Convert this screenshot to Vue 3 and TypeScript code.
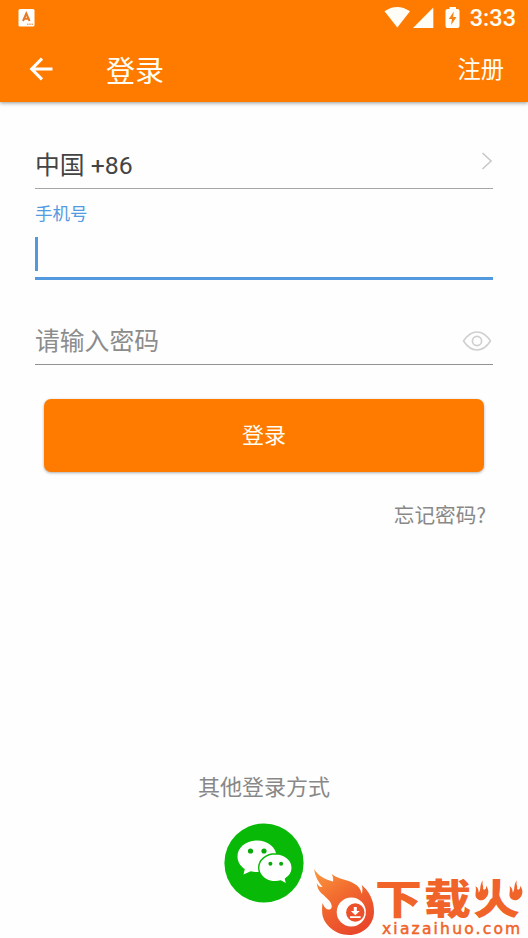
<script setup lang="ts">
import { ref } from 'vue'

const country = ref('中国 +86')
const passwordHint = '请输入密码'
</script>

<template>
  <div class="screen">
    <header class="header">
      <div class="status">
        <svg class="app-badge" width="17" height="18" viewBox="0 0 17 18">
          <rect x=".5" width="16" height="17.4" rx="1.5" fill="#fff" />
          <path d="M5 12 8.300 4.500l3.300 7.500M6.200 9.800h4.200" fill="none" stroke="#e87924" stroke-width="2" />
          <path d="M9 15.300h6" stroke="#f5a460" stroke-width="1.400" stroke-dasharray="1.500 .8" />
        </svg>
        <div class="system">
          <svg width="86" height="36" viewBox="385 0 86 36" class="system-icons">
            <path d="M385.500 11.300Q398 2.500 411 11.300L398.300 27.500Z" fill="#fffdf5" />
            <path d="M434.300 7.500V28H414Z" fill="#fffdf5" />
            <path d="M450.500 7h6.500v2h1.500q2 0 2 2v15q0 2-2 2h-10q-2 0-2-2V11q0-2 2-2h2Z" fill="#fffdf5" />
            <path d="M454.800 11.500 449.800 19h3.100l-.8 6 5.400-8h-3.400Z" fill="#f78216" />
          </svg>
          <span class="clock">3:33</span>
        </div>
      </div>
      <div class="toolbar">
        <svg class="back" width="26" height="26" viewBox="0 0 26 26">
          <path d="M24.500 13H4M14 2.700 3.700 13 14 23.300" fill="none" stroke="#fff" stroke-width="3.100" />
        </svg>
        <h1>登录</h1>
        <span class="register">注册</span>
      </div>
    </header>

    <main class="form">
      <div class="country">
        <span>{{ country }}</span>
        <svg width="12" height="18" viewBox="0 0 12 18">
          <path d="m1.500 1 8.600 8-8.600 8" fill="none" stroke="#c6c6c6" stroke-width="1.500" />
        </svg>
      </div>
      <div class="phone">
        <label>手机号</label>
        <div class="caret"></div>
      </div>
      <div class="password">
        <span>{{ passwordHint }}</span>
        <svg width="30" height="22" viewBox="0 0 30 22">
          <path d="M1.500 11Q7.500 2 15 2t13.500 9Q22.500 20 15 20T1.500 11Z" fill="none" stroke="#cfcfcf" stroke-width="1.600" stroke-linejoin="round" />
          <circle cx="15" cy="11" r="4.600" fill="none" stroke="#cfcfcf" stroke-width="1.700" />
        </svg>
      </div>
      <button class="login" type="button">登录</button>
      <div class="forgot">忘记密码?</div>
    </main>

    <section class="others">
      <p>其他登录方式</p>
      <svg class="wechat" width="80" height="80" viewBox="0 0 80 80">
        <circle cx="40" cy="40" r="39.600" fill="#08ba07" />
        <path d="M33 17.500C22 17.500 13.500 24.500 13.500 33.500c0 5.300 2.900 9.700 7.300 12.500L19.500 51.500l7.200-3.300c2 .6 4.200.9 6.500.9 10.900 0 19.300-7 19.300-15.700S44 17.500 33 17.500Z" fill="#fff" />
        <path d="M51.500 30.800C42 30.800 34.700 37 34.700 44.800S42 58.700 51.500 58.700c1.800 0 3.500-.2 5.200-.7l6.100 3.300-1.300-5.400c4-2.600 6.700-6.600 6.700-11.100 0-7.800-7.400-14-16.700-14Z" fill="#fff" stroke="#08ba07" stroke-width="1.400" />
        <circle cx="26.500" cy="28" r="2.600" fill="#08a90a" />
        <circle cx="40" cy="28" r="2.600" fill="#08a90a" />
        <circle cx="46.400" cy="40.700" r="2" fill="#08a90a" />
        <circle cx="57.100" cy="40.700" r="2" fill="#08a90a" />
      </svg>
    </section>

    <aside class="brand">
      <svg class="flame" width="62" height="68" viewBox="0 0 62 68">
        <defs>
          <linearGradient id="fire" x1="0" y1="0" x2=".6" y2="1">
            <stop offset="0" stop-color="#fb9a40" />
            <stop offset=".45" stop-color="#f26d2f" />
            <stop offset="1" stop-color="#e9482b" />
          </linearGradient>
        </defs>
        <path d="M1 1C5 7.500 11 11 20 13.500 20.500 11 20 9 18.700 6 24 10.500 32 11.500 38 14c7 3 10 7 10.500 12 1.500-3 1-6 .2-9C56 23 61 32 61 43.500 61 57 50 67 36 67S10.500 56 9.300 46C9 42 9 39 9.500 35c1.500 4 4 7 7 6.500 3.500-1 2.500-5 0-8.500C11 26 4.500 25 3.700 15 5 17.500 7 19.500 9.500 19 5 14 2 8 1 1Z" fill="url(#fire)" />
        <circle cx="38.300" cy="44" r="14.600" fill="#fff" />
        <circle cx="42.300" cy="44.500" r="9.200" fill="#ed512b" />
        <path d="M40.800 39h3v4h3l-4.500 4.300-4.500-4.300h3ZM37 48.300h10.600v1.800H37Z" fill="#fff" />
      </svg>
      <div class="brand-copy">
        <div class="brand-name">
          <span>下</span><span>载</span><span class="huo">火
            <svg class="sparks" width="50" height="28" viewBox="0 0 50 28">
              <path d="M0-3h19.500v23L15 24H0ZM29.500-3H50v28H36l-6.500-4Z" fill="#fefefe" />
              <path id="spark" d="M10 0c-1.500 5 1 7 0 10l1.500 1c1.500-1 2-3 1.500-5 4 6 2.500 12-1 15-4 4-10 1-9.500-5 0-3 1-6 0-9 2 1 3.500 4 3 7 3-3 .5-9 4.500-14Z" fill="#f0642a" />
              <use href="#spark" x="34" y="0" />
            </svg>
          </span>
        </div>
        <div class="brand-url">xiazaihuo.com</div>
      </div>
    </aside>
  </div>
</template>

<style>
body { background: #fefefe; }
</style>

<style scoped>
* { box-sizing: border-box; }
.screen {
  position: relative;
  width: 528px;
  height: 938px;
  overflow: hidden;
  background: #fefefe;
  color: #444;
  font-family: Roboto, "Noto Sans CJK SC", sans-serif;
}
.header {
  height: 102px;
  color: #fffdf4;
  background: #ff7b00;
  box-shadow: 0 1px 4px rgba(0, 0, 0, .42);
}
.status {
  display: flex;
  height: 36px;
  align-items: center;
  justify-content: space-between;
  padding: 0 12px 0 18px;
}
.system { display: flex; align-items: center; }
.clock { font: 500 23.500px/36px Roboto, sans-serif; }
.toolbar {
  display: flex;
  height: 66px;
  align-items: center;
  padding: 0 24px 0 28px;
}
h1 { margin: 0 0 0 52px; padding-top: 5px; font-size: 29px; font-weight: 400; line-height: 42px; }
.register { margin-left: auto; padding-top: 2px; font-size: 23.300px; line-height: 36px; }
.form { padding: 38px 35px 0; }
.country {
  display: flex;
  height: 49px;
  align-items: center;
  justify-content: space-between;
  border-bottom: 1px solid #a6a6a6;
  font-size: 24.800px;
  line-height: 36px;
}
.country span { padding-top: 4px; }
.country svg { margin-bottom: 7px; }
.phone {
  height: 91px;
  padding-top: 12px;
  border-bottom: 3px solid #529add;
  color: #529be1;
}
label { display: block; height: 26px; font-size: 17.500px; line-height: 26px; }
.caret { width: 3px; height: 34px; margin-top: 10px; background: #529add; }
.password {
  display: flex;
  height: 85px;
  align-items: center;
  justify-content: space-between;
  padding: 38px 1px 0 0;
  border-bottom: 1.500px solid #929292;
  color: #8c8c8c;
  font-size: 24.800px;
  line-height: 36px;
}
.password span { padding-top: 1px; }
.login {
  display: block;
  width: 440px;
  height: 73px;
  margin: 34px 9px 0;
  padding: 0;
  border: 0;
  border-radius: 7px;
  color: #fffdf4;
  background: #ff7b00;
  box-shadow: 0 1px 3px rgba(0, 0, 0, .32);
  font: 400 22px/73px Roboto, "Noto Sans CJK SC", sans-serif;
}
.forgot { margin-top: 27px; padding-right: 7px; text-align: right; font: 20.600px/30px "Noto Sans CJK SC", sans-serif; color: #888; }
.others { display: flex; flex-direction: column; align-items: center; padding-top: 243px; }
.others p { margin: 0; font-size: 22px; line-height: 32px; color: #888; }
.wechat { margin-top: 19px; }
.brand { position: absolute; left: 313px; top: 868px; display: flex; }
.brand-copy { padding-top: 7px; }
.brand-name {
  display: flex;
  height: 42px;
  color: #f0642a;
  font: 900 47px/42px "Noto Sans CJK SC", sans-serif;
  letter-spacing: 2px;
  transform: scaleY(.88);
}
.brand-name > span { height: 42px; }
.huo { position: relative; }
.sparks { position: absolute; left: 0; top: 3px; overflow: visible; }
.brand-url {
  margin-top: 4px;
  padding-left: 7px;
  color: #f0642a;
  font: 400 15.500px/16px "DejaVu Sans", sans-serif;
  letter-spacing: 2.200px;
  -webkit-text-stroke: .5px #f0642a;
}
</style>
